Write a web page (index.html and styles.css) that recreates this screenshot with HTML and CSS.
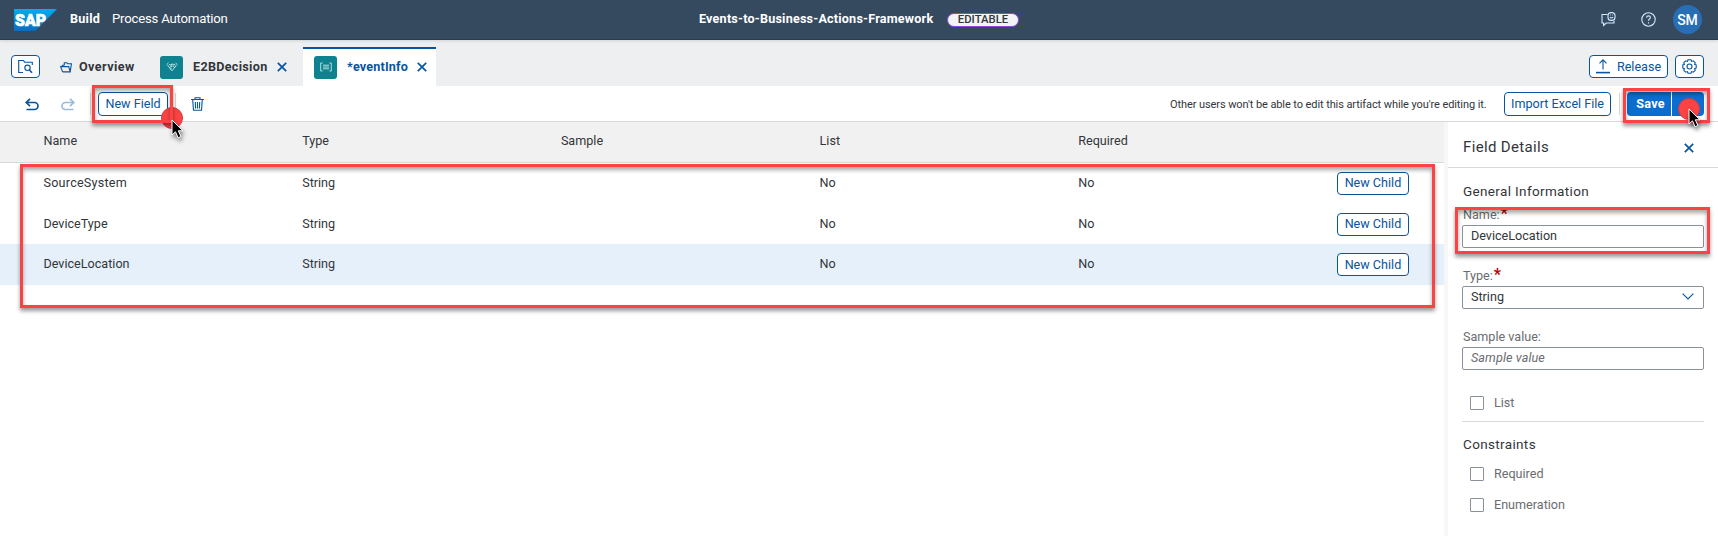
FILE: index.html
```html
<!DOCTYPE html>
<html lang="en">
<head>
<meta charset="utf-8">
<title>SAP Build Process Automation</title>
<link rel="stylesheet" href="styles.css">
</head>
<body>
<header class="shell">
  <svg class="logo" width="43" height="22" viewBox="0 0 43 22"><defs><linearGradient id="sap" x1="0" y1="0" x2="0" y2="1"><stop offset="0" stop-color="#00aeef"/><stop offset="1" stop-color="#0b6bc0"/></linearGradient></defs><path fill="url(#sap)" d="M0 0h43L21.500 22H0z"/><text x="1" y="17" textLength="31" lengthAdjust="spacingAndGlyphs" class="logo-text">SAP</text></svg>
  <span class="product">Build</span><span class="suite">Process Automation</span>
  <div class="project"><span class="project-name">Events-to-Business-Actions-Framework</span><span class="pill">EDITABLE</span></div>
  <div class="shell-tools">
    <svg width="15" height="15" viewBox="0 0 15 15" class="line pale"><path d="M6.500 2.500H1v8.500h1.600v2.500l2.600-2.500H13v-2"/><rect x="7" y=".6" width="7" height="7.800" rx="3"/><path d="M8.800 5.200q1.700 1.600 3.400 0M9.200 3h.8M11.200 3h.8"/></svg>
    <svg width="15" height="15" viewBox="0 0 15 15" class="line pale help"><circle cx="7.500" cy="7.500" r="6.700"/><path d="M5.600 5.800q0-1.900 1.900-1.900t1.900 1.700c0 1.500-1.900 1.300-1.900 3.200M7.500 10.200v1.200"/></svg>
    <span class="avatar">SM</span>
  </div>
</header>
<nav class="tabs">
  <button class="btn icon-btn"><svg width="15" height="15" viewBox="0 0 15 15" class="line"><path d="M5 13.500H.7V1.500h4.600l1.400 1.700h7.600v2.800"/><circle cx="9.500" cy="8.800" r="2.700"/><path d="m11.500 11 2.500 2.800" stroke-width="1.600"/></svg></button>
  <div class="tab overview"><svg width="12" height="11" viewBox="0 0 12 11" class="line"><path d="M4.300 3.300V.8h2.500l1 1h3.600L10.200 9.800M2.600 9.900 .6 4.600H8.700L10.200 9.900H2.600M2.400 4.400V3.300h2"/></svg><span>Overview</span></div>
  <div class="tab"><i class="tile"><svg width="12" height="10" viewBox="0 0 12 10" class="line"><path d="M2.500.8.600 2.700M9.500.8l1.900 1.900M1.500 3 6 8.800 10.500 3M3 2.300l1.500.5L6.300 2l3 .8M6.300 2 4.500 4.400l1.300.4L7 3.600l2 2.200M3.500 6.200l.9-1M4.600 7.500l.9-1"/></svg></i><span>E2BDecision</span><svg width="10" height="10" viewBox="0 0 10 10" class="line cross"><path d="m.8.800 8.400 8.400M9.200.8.800 9.200"/></svg></div>
  <div class="tab active"><i class="tile"><svg width="12" height="10" viewBox="0 0 12 10" class="line"><path d="M2.600 1H.7v8h1.900M9.400 1h1.900v8H9.400M3 3.200h6M3 5h6M3 6.800h6"/></svg></i><span>*eventInfo</span><svg width="10" height="10" viewBox="0 0 10 10" class="line cross"><path d="m.8.800 8.400 8.400M9.200.8.800 9.200"/></svg></div>
  <div class="tab-actions">
    <button class="btn release"><svg width="14" height="15" viewBox="0 0 14 15" class="line"><path d="M7 10.500V.8M3.500 4.300 7 .8l3.500 3.500"/><path d="M0 13.600h14" stroke-width="1.600"/></svg><span>Release</span></button>
    <button class="btn icon-btn"><svg width="15" height="15" viewBox="0 0 15 15" class="line"><path d="m6 .8 3 0 .5 1.600 1.800-.6 1.900 1.900-.6 1.800 1.600.5v3l-1.600.5.6 1.800-1.900 1.900-1.800-.6-.5 1.600H6l-.5-1.600-1.800.6-1.900-1.900.6-1.800L.8 9V6l1.600-.5-.6-1.800 1.900-1.900 1.800.6z"/><circle cx="7.500" cy="7.500" r="2.500"/></svg></button>
  </div>
</nav>
<div class="toolbar">
  <svg width="14" height="13" viewBox="0 0 14 13" class="line undo"><path d="M5 .8 1.200 4.500 5 8.200M1.200 4.500h8.300a3.400 3.400 0 0 1 0 7H1.500"/></svg>
  <svg width="14" height="13" viewBox="0 0 14 13" class="line redo"><path d="m9 .8 3.800 3.700L9 8.200M12.800 4.500H4.500a3.400 3.400 0 0 0 0 7h8"/></svg>
  <i class="sep"></i>
  <button class="btn new-field"><span>New Field</span></button>
  <i class="sep"></i>
  <svg width="13" height="14" viewBox="0 0 13 14" class="line trash"><path d="M0 2.500h13M4 2.300V.7h5v1.600M1.700 2.700l.8 10.600h8L11.300 2.700M4.300 5l.3 6.500M6.500 5v6.500M8.700 5l-.3 6.500"/></svg>
  <div class="toolbar-end"><span class="notice">Other users won't be able to edit this artifact while you're editing it.</span>
    <button class="btn import"><span>Import Excel File</span></button><i class="sep"></i>
    <div class="split"><button class="save">Save</button><button class="save-menu"></button></div></div>
</div>
<main class="content">
  <section class="table">
    <div class="row head"><span>Name</span><span>Type</span><span>Sample</span><span>List</span><span>Required</span><span></span></div>
    <div class="row"><span class="wide">SourceSystem</span><span>String</span><span></span><span>No</span><span>No</span><button class="btn child">New Child</button></div>
    <div class="row"><span>DeviceType</span><span>String</span><span></span><span>No</span><span>No</span><button class="btn child">New Child</button></div>
    <div class="row selected"><span>DeviceLocation</span><span>String</span><span></span><span>No</span><span>No</span><button class="btn child">New Child</button></div>
  </section>
  <aside class="details">
    <div class="details-head"><h2>Field Details</h2><svg width="10" height="10" viewBox="0 0 10 10" class="line cross"><path d="m.8.800 8.400 8.400M9.200.8.800 9.200"/></svg></div>
    <div class="form">
      <h3>General Information</h3>
      <label>Name:<b>*</b></label><div class="field">DeviceLocation</div>
      <label>Type:<b>*</b></label><div class="field">String<svg width="12" height="7" viewBox="0 0 12 7" class="line"><path d="m.6.700 5.400 5.300L11.400.700"/></svg></div>
      <label>Sample value:</label><div class="field placeholder">Sample value</div>
      <div class="check list"><i></i>List</div>
      <h3 class="constraints">Constraints</h3>
      <div class="check required"><i></i>Required</div>
      <div class="check"><i></i>Enumeration</div>
    </div>
  </aside>
</main>
<i class="dot dot-new"></i>
<div class="mark mark-new"></div><div class="mark mark-save"></div><div class="mark mark-rows"></div><div class="mark mark-name"></div>
<i class="dot dot-save"></i>
<svg class="cursor cursor-new" width="14" height="21" viewBox="0 0 14 21"><path d="M1 1v15l3.500-3.200 2.600 6 2.800-1.300-2.600-5.700H12z"/></svg>
<svg class="cursor cursor-save" width="14" height="21" viewBox="0 0 14 21"><path d="M1 1v15l3.500-3.200 2.600 6 2.800-1.300-2.600-5.700H12z"/></svg>
</body>
</html>
```
FILE: styles.css
```css
* { box-sizing: border-box; }
body { margin: 0; width: 1718px; height: 536px; overflow: hidden; position: relative; background: #fff; color: #32363a; font: 12.6px/16px Roboto, "Noto Sans", sans-serif; }
button { font: inherit; margin: 0; }
span, label, h2, h3 { white-space: nowrap; }
svg { flex: none; }
.line { fill: none; stroke: #0854a0; stroke-width: 1.1; }
.pale { stroke: #d1e8ff; }
.cross { stroke-width: 1.7; }

.shell { height: 40px; background: #354a5f; border-bottom: 1px solid #283d51; display: flex; align-items: center; padding: 0 16px 3px 14px; color: #fff; position: relative; z-index: 1; box-shadow: 0 1px 3px rgba(0,0,0,.12); }
.logo { margin-top: 4px; }
.logo-text { font: 900 16.5px Roboto, sans-serif; fill: #fff; stroke: #fff; stroke-width: .7; }
.product { font-weight: 700; margin: 1px 0 0 13px; width: 42px; letter-spacing: .25px; }
.project { margin-left: 478px; display: flex; align-items: center; flex: none; }
.suite { width: 109px; letter-spacing: -.22px; margin-top: 1px; font-size: 13.2px; }
.project-name { font-weight: 700; width: 248px; letter-spacing: .2px; margin-top: 1px; }
.pill { width: 72px; height: 14px; margin-top: 4px; border: 1px solid #8b47d7; border-radius: 7px; background: #f3f4f5; color: #32363a; font-size: 11.3px; line-height: 11px; font-weight: 500; text-align: center; }
.shell-tools { display: flex; align-items: center; margin-left: auto; padding-top: 3px; }
.help { margin: 0 17px 0 25px; }
.avatar { width: 29px; height: 29px; border-radius: 50%; background: #286eb4; font-size: 14px; line-height: 30px; font-weight: 500; text-align: center; }

.tabs { height: 46px; background: #edeff0; display: flex; align-items: flex-end; padding: 0 14px 0 11px; }
.btn { height: 23px; border: 1px solid #0854a0; border-radius: 4px; background: #fff; color: #0854a0; padding: 0; display: flex; align-items: center; justify-content: center; }
.tabs .btn { margin-bottom: 8px; }
.icon-btn { width: 29px; }
.tab { height: 39px; border-top: 2px solid transparent; display: flex; align-items: center; padding: 0 9px 1px 11px; font-weight: 700; }
.tab > .cross { margin-left: 10px; }
.overview { padding: 0 14px 1px 20px; }
.overview span { margin-left: 7px; width: 56px; letter-spacing: .42px; }
.tile { width: 23px; height: 23px; border-radius: 3px; background: #0f828f; display: flex; align-items: center; justify-content: center; margin-right: 10px; }
.tile .line { stroke: #d9f2f3; stroke-width: .8; }
.tab:nth-child(3) { width: 154px; }
.tab:nth-child(3) > span { width: 74px; letter-spacing: .3px; }
.active { width: 133px; background: #fff; border-top-color: #0854a0; color: #0854a0; }
.active > span { width: 60px; letter-spacing: .17px; }
.tab-actions { margin-left: auto; display: flex; gap: 7px; }
.release { width: 79px; gap: 7px; }

.toolbar { height: 36px; border-bottom: 1px solid #d9d9d9; display: flex; align-items: center; padding: 0 14px 0 25px; }
.undo { stroke-width: 1.7; margin-top: 2px; }
.redo { stroke-width: 1.7; opacity: .4; margin: 2px 15px 0 22px; }
.sep { width: 1px; height: 22px; background: #d9d9d9; }
.toolbar .btn { height: 24px; }
.new-field { width: 70px; margin: 0 7px; }
.trash { margin-left: 15px; }
.toolbar-end { display: flex; align-items: center; margin-left: auto; }
.notice { font-size: 11px; width: 334px; padding-top: 2px; letter-spacing: -.09px; }
.import { width: 107px; margin-right: 8px; }
.split { display: flex; gap: 1px; margin-left: 7px; }
.split button { border: 0; background: #0a6ed1; color: #fff; height: 24px; padding: 0; font-weight: 700; }
.split .save { width: 44px; border-radius: 4px 0 0 4px; padding-left: 3px; letter-spacing: .2px; }
.split .save-menu { width: 32px; border-radius: 0 4px 4px 0; }

.content { display: flex; height: 414px; }
.table { width: 1444px; flex: none; }
.row { display: grid; grid-template-columns: repeat(5, 258.7px) 72px; padding: 0 0 1px 43.500px; align-items: center; height: 40.7px; }
.row.head { height: 41px; background: #f1f1f1; border-bottom: 1px solid #d9d9d9; padding-bottom: 3px; }
.wide { letter-spacing: .22px; }
.selected { background: #e5f0fa; }
.child { margin-top: 1px; }
.details { width: 274px; border-left: 4px solid #f7f7f7; }
.details-head { height: 46px; border-bottom: 1px solid #d9d9d9; display: flex; align-items: center; justify-content: space-between; padding: 4px 24px 0 15px; }
.details-head .cross { margin-top: 3px; }
h2 { font-size: 15px; font-weight: 400; margin: 0; letter-spacing: .35px; }
.form { padding: 15px 14px 0; display: flex; flex-direction: column; }
h3 { font-size: 13.5px; font-weight: 400; line-height: 16px; margin: 0 0 8px 1px; letter-spacing: .35px; }
label { color: #6a6d70; line-height: 15px; height: 17px; margin-left: 1px; }
label b { color: #bb0000; font-size: 16px; line-height: 12px; margin-left: 1px; }
.field { height: 23px; border: 1px solid #89919a; border-radius: 2px; padding: 0 9px 2px 8px; display: flex; align-items: center; justify-content: space-between; margin: 1px 0 20px; }
.placeholder { color: #6a6d70; font-style: italic; letter-spacing: .1px; }
.check { display: flex; align-items: center; color: #6a6d70; height: 15px; padding-left: 8px; }
.check i { width: 14px; height: 14px; border: 1px solid #89919a; border-radius: 1px; margin-right: 10px; }
.list { margin-top: 5px; }
.constraints { border-top: 1px solid #d9d9d9; margin: 11px 0 14px; padding: 14px 0 0 1px; }
.required { margin-bottom: 16px; }

.mark { position: absolute; border: 3px solid #fc4343; box-shadow: 0 3px 4px rgba(0,0,0,.4), inset 0 3px 4px rgba(0,0,0,.35); }
.mark-new { left: 92px; top: 85px; width: 81px; height: 38px; }
.mark-save { left: 1623px; top: 88px; width: 87px; height: 35px; }
.mark-rows { left: 20px; top: 164px; width: 1415px; height: 144px; }
.mark-name { left: 1455px; top: 207px; width: 255px; height: 47px; }
.dot { position: absolute; width: 22px; height: 22px; border-radius: 50%; background: #fc4343; border: 1px solid #d43a42; }
.dot-new { left: 161px; top: 107px; }
.dot-save { left: 1678px; top: 98px; }
.cursor { position: absolute; fill: #000; stroke: #fff; stroke-width: 1; filter: drop-shadow(1px 3px 2px rgba(0,0,0,.5)); }
.cursor-new { left: 171px; top: 119px; }
.cursor-save { left: 1688px; top: 108px; }
```
